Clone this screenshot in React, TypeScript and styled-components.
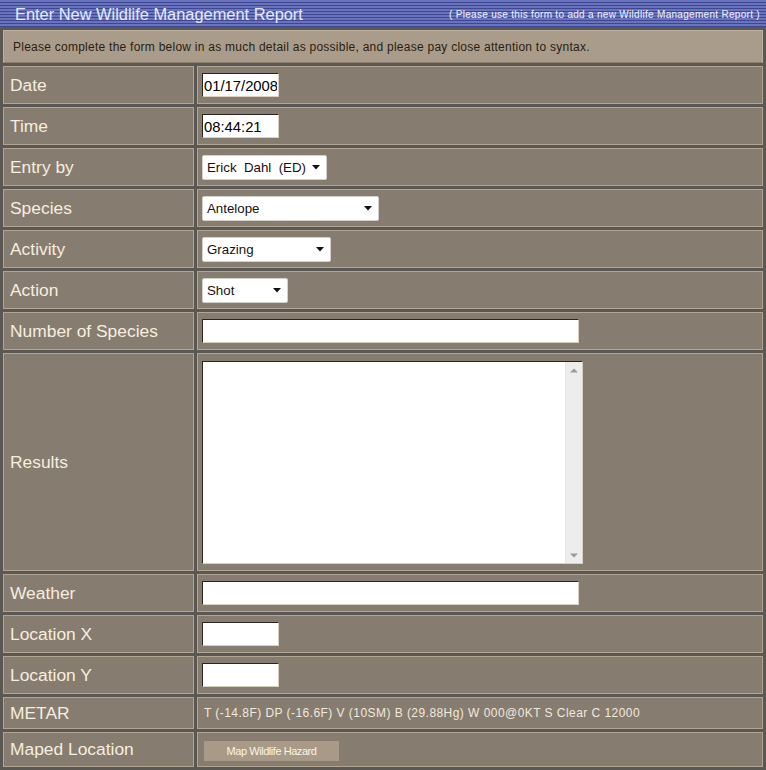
import React from "react";
import styled, { createGlobalStyle } from "styled-components";

const GlobalStyle = createGlobalStyle`
  html, body {
    margin: 0;
    padding: 0;
    background: #5b5854;
  }
  body {
    font-family: "Liberation Sans", Arial, sans-serif;
  }
`;

const Page = styled.div`
  width: 766px;
  height: 770px;
  background: #5b5854;
  display: flex;
  flex-direction: column;
  overflow: hidden;
`;

const TitleBar = styled.div`
  height: 27px;
  flex-shrink: 0;
  display: flex;
  align-items: center;
  justify-content: space-between;
  padding: 0 6px 0 15px;
  background: repeating-linear-gradient(
    to bottom,
    #6a74bd 0px,
    #6a74bd 2px,
    #3d4794 2px,
    #3d4794 3px
  );
`;

const Title = styled.div`
  font-size: 16.4px;
  color: #e4eaff;
  padding-top: 1px;
`;

const Hint = styled.div`
  font-size: 10px;
  letter-spacing: 0.3px;
  color: #eef0ff;
  padding-top: 2px;
`;

const Frame = styled.div`
  padding: 3px;
  display: grid;
  grid-template-columns: 191px 1fr;
  grid-template-rows: 33px repeat(7, 38px) 218px repeat(3, 38px) 32px 35px;
  gap: 3px;
`;

const Intro = styled.div`
  grid-column: 1 / span 2;
  background: #a99c8b;
  border: 1px solid #bdb09e;
  border-bottom-color: #8a7e70;
  display: flex;
  align-items: center;
  padding-left: 9px;
  font-size: 12px;
  letter-spacing: 0.25px;
  color: #2a1e12;
`;

const Cell = styled.div`
  background: #877c70;
  border: 1px solid #b3a593;
  display: flex;
  align-items: center;
  box-sizing: border-box;
  min-height: 0;
`;

const Label = styled(Cell)`
  padding-left: 6px;
  font-size: 17.4px;
  color: #f6eedf;
`;

const Value = styled(Cell)`
  padding-left: 4px;
`;

const TextInput = styled.input<{ $w: number }>`
  width: ${(p) => p.$w}px;
  height: 24px;
  box-sizing: border-box;
  margin: 0;
  padding: 1px 1px 0;
  background: #fff;
  border: 1px solid;
  border-color: #2b2520 #d9d0c2 #d9d0c2 #2b2520;
  font-family: "Liberation Sans", Arial, sans-serif;
  font-size: 14.8px;
  color: #000;
  outline: none;
`;

const SelectBox = styled.div<{ $w: number }>`
  width: ${(p) => p.$w}px;
  height: 25px;
  box-sizing: border-box;
  display: flex;
  align-items: center;
  gap: 1px;
  background: #fff;
  border: 1px solid #d4d0cc;
  border-radius: 2px;
  padding-right: 6px;

  svg {
    flex-shrink: 0;
  }
`;

const Select = styled.select`
  flex: 1;
  min-width: 0;
  appearance: none;
  -webkit-appearance: none;
  border: none;
  background: transparent;
  padding: 0 0 0 4px;
  margin: 0;
  font-family: "Liberation Sans", Arial, sans-serif;
  font-size: 13.3px;
  color: #1a0f10;
  outline: none;
`;

const TextBox = styled.div`
  width: 381px;
  height: 203px;
  box-sizing: border-box;
  display: flex;
  background: #fff;
  border: 1px solid;
  border-color: #2b2520 #d9d0c2 #d9d0c2 #2b2520;
`;

const Area = styled.textarea`
  flex: 1;
  border: none;
  resize: none;
  outline: none;
  margin: 0;
  padding: 2px;
  background: transparent;
  font-family: "Liberation Sans", Arial, sans-serif;
  font-size: 13px;
`;

const ScrollTrack = styled.div`
  width: 16px;
  background: #ededed;
  border-left: 1px solid #e4e4e4;
  display: flex;
  flex-direction: column;
  justify-content: space-between;
  align-items: center;
  padding: 6px 0 5px;
`;

const Metar = styled.div`
  font-size: 12px;
  letter-spacing: 0.45px;
  color: #f1e9dc;
  padding-left: 2px;
`;

const MapButton = styled.button`
  width: 135px;
  height: 20px;
  margin: 2px 0 0 2px;
  padding: 0;
  border: none;
  background: #a99a87;
  color: #fbf4e8;
  font-family: "Liberation Sans", Arial, sans-serif;
  font-size: 11px;
  letter-spacing: -0.45px;
  cursor: pointer;
`;

const Caret = () => (
  <svg width="8" height="5" viewBox="0 0 8 5">
    <path d="M0 0H8L4 4.5Z" fill="#111" />
  </svg>
);

const ScrollArrow = ({ down }: { down?: boolean }) => (
  <svg width="8" height="5" viewBox="0 0 8 5">
    <path d={down ? "M0 0.5H8L4 4.5Z" : "M4 0.5L8 4.5H0Z"} fill="#9a9a9a" />
  </svg>
);

const Dropdown = ({ w, value }: { w: number; value: string }) => (
  <SelectBox $w={w}>
    <Select defaultValue={value}>
      <option value={value}>{value}</option>
    </Select>
    <Caret />
  </SelectBox>
);

export default function App() {
  return (
    <Page>
      <GlobalStyle />
      <TitleBar>
        <Title>Enter New Wildlife Management Report</Title>
        <Hint>( Please use this form to add a new Wildlife Management Report )</Hint>
      </TitleBar>
      <Frame>
        <Intro>
          Please complete the form below in as much detail as possible, and please pay close attention to
          syntax.
        </Intro>

        <Label>Date</Label>
        <Value>
          <TextInput $w={77} defaultValue="01/17/2008" />
        </Value>

        <Label>Time</Label>
        <Value>
          <TextInput $w={77} defaultValue="08:44:21" />
        </Value>

        <Label>Entry by</Label>
        <Value>
          <Dropdown w={125} value={"Erick\u00a0 Dahl\u00a0 (ED)"} />
        </Value>

        <Label>Species</Label>
        <Value>
          <Dropdown w={177} value="Antelope" />
        </Value>

        <Label>Activity</Label>
        <Value>
          <Dropdown w={129} value="Grazing" />
        </Value>

        <Label>Action</Label>
        <Value>
          <Dropdown w={86} value="Shot" />
        </Value>

        <Label>Number of Species</Label>
        <Value>
          <TextInput $w={377} />
        </Value>

        <Label>Results</Label>
        <Value>
          <TextBox>
            <Area />
            <ScrollTrack>
              <ScrollArrow />
              <ScrollArrow down />
            </ScrollTrack>
          </TextBox>
        </Value>

        <Label>Weather</Label>
        <Value>
          <TextInput $w={377} />
        </Value>

        <Label>Location X</Label>
        <Value>
          <TextInput $w={77} />
        </Value>

        <Label>Location Y</Label>
        <Value>
          <TextInput $w={77} />
        </Value>

        <Label>METAR</Label>
        <Value>
          <Metar>T (-14.8F) DP (-16.6F) V (10SM) B (29.88Hg) W 000@0KT S Clear C 12000</Metar>
        </Value>

        <Label>Maped Location</Label>
        <Value>
          <MapButton>Map Wildlife Hazard</MapButton>
        </Value>
      </Frame>
    </Page>
  );
}
